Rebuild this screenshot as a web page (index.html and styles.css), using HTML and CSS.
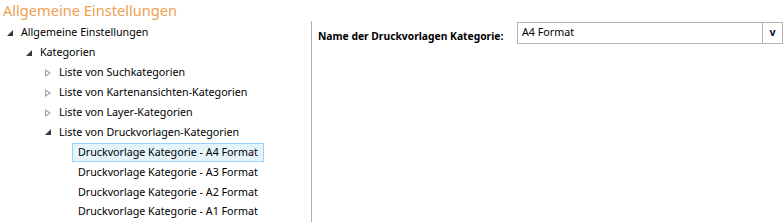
FILE: index.html
```html
<!DOCTYPE html>
<html>
<head>
<meta charset="utf-8">
<link rel="stylesheet" href="styles.css">
</head>
<body>
<div class="page">
  <div class="title">Allgemeine Einstellungen</div>
  <div class="main">
    <div class="tree">
      <div class="row l0"><span class="exp"></span><span class="txt">Allgemeine Einstellungen</span></div>
      <div class="row l1"><span class="exp"></span><span class="txt">Kategorien</span></div>
      <div class="row l2"><span class="col"></span><span class="txt">Liste von Suchkategorien</span></div>
      <div class="row l2"><span class="col"></span><span class="txt">Liste von Kartenansichten-Kategorien</span></div>
      <div class="row l2"><span class="col"></span><span class="txt">Liste von Layer-Kategorien</span></div>
      <div class="row l2"><span class="exp"></span><span class="txt">Liste von Druckvorlagen-Kategorien</span></div>
      <div class="row l3"><span class="txt sel">Druckvorlage Kategorie - A4 Format</span></div>
      <div class="row l3"><span class="txt">Druckvorlage Kategorie - A3 Format</span></div>
      <div class="row l3"><span class="txt">Druckvorlage Kategorie - A2 Format</span></div>
      <div class="row l3"><span class="txt">Druckvorlage Kategorie - A1 Format</span></div>
    </div>
    <div class="divider"></div>
    <div class="form">
      <div class="field">
        <label class="label">Name der Druckvorlagen Kategorie:</label>
        <div class="combo">
          <div class="value">A4 Format</div>
          <div class="btn">v</div>
        </div>
      </div>
    </div>
  </div>
</div>
</body>
</html>
```
FILE: styles.css
```css
html, body { margin: 0; padding: 0; background: #fff; }
body { font-family: "Noto Sans", "Open Sans", sans-serif; font-size: 10.7px; color: #000; }
.page { width: 784px; height: 222px; overflow: hidden; }
.title { color: #f0a050; font-size: 14.6px; line-height: 20px; height: 21px; padding-left: 3px; }
.main { display: flex; height: 201px; }
.tree { width: 311px; padding-top: 2px; }
.row { height: 19.9px; display: flex; align-items: center; white-space: nowrap; }
.l0 { padding-left: 7px; }
.l1 { padding-left: 26px; }
.l2 { padding-left: 45px; }
.l3 { padding-left: 72px; }
.exp, .col { width: 6px; height: 8px; margin-right: 5px; flex: none; position: relative; }
.exp::before { content: ""; position: absolute; left: 0; top: 1px; width: 0; height: 0;
  border-left: 6px solid transparent; border-bottom: 6px solid #3a3a3a; }
.col::before { content: ""; position: absolute; left: 0; top: 0; width: 0; height: 0;
  border-top: 4px solid transparent; border-bottom: 4px solid transparent; border-left: 6px solid #a0a0a0; }
.col::after { content: ""; position: absolute; left: 1px; top: 2px; width: 0; height: 0;
  border-top: 2px solid transparent; border-bottom: 2px solid transparent; border-left: 3px solid #fff; }
.txt { padding: 0 5px; line-height: 17px; border: 1px solid transparent; }
.l0 .txt, .l1 .txt, .l2 .txt { padding: 0 0 0 2px; }
.sel { background: #e5f3fb; border-color: #99d1ff; }
.divider { width: 1px; background: #b0b0b0; flex: none; }
.form { flex: 1; padding: 1px 0 0 6px; }
.field { display: flex; align-items: flex-start; }
.label { font-weight: bold; font-size: 10.3px; width: 199px; flex: none; white-space: nowrap; padding-top: 7px; }
.combo { display: flex; width: 264px; height: 20px; border: 1px solid #b4b4b4; }
.value { flex: 1; padding-left: 4px; line-height: 19px; }
.btn { width: 19px; border-left: 1px solid #b4b4b4; font-weight: bold; text-align: center; line-height: 18px; color: #101040; }
```
